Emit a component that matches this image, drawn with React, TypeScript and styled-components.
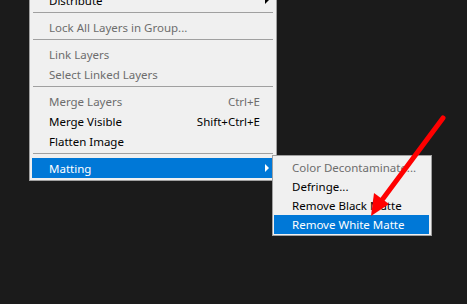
import * as React from 'react';
import styled, { createGlobalStyle } from 'styled-components';

interface Item {
  label?: string;
  shortcut?: string;
  disabled?: boolean;
  submenu?: boolean;
  active?: boolean;
  separator?: boolean;
}

const layerItems: Item[] = [
  { label: 'Distribute', submenu: true },
  { separator: true },
  { label: 'Lock All Layers in Group...', disabled: true },
  { separator: true },
  { label: 'Link Layers', disabled: true },
  { label: 'Select Linked Layers', disabled: true },
  { separator: true },
  { label: 'Merge Layers', shortcut: 'Ctrl+E', disabled: true },
  { label: 'Merge Visible', shortcut: 'Shift+Ctrl+E' },
  { label: 'Flatten Image' },
  { separator: true },
  { label: 'Matting', submenu: true, active: true },
];

const mattingItems: Item[] = [
  { label: 'Color Decontaminate...', disabled: true },
  { label: 'Defringe...' },
  { label: 'Remove Black Matte' },
  { label: 'Remove White Matte', active: true },
];

export default function App() {
  return (
    <>
      <GlobalStyle />
      <Stage>
        <LayerMenu>
          {layerItems.map((item, i) =>
            item.separator ? (
              <Separator key={i} />
            ) : (
              <Row key={i} $active={item.active} $disabled={item.disabled}>
                <Label>{item.label}</Label>
                {item.shortcut && <Shortcut>{item.shortcut}</Shortcut>}
                {item.submenu && <Caret $active={item.active} />}
                {item.active && (
                  <SubMenu>
                    {mattingItems.map(sub => (
                      <SubRow
                        key={sub.label}
                        $active={sub.active}
                        $disabled={sub.disabled}
                      >
                        {sub.label}
                      </SubRow>
                    ))}
                  </SubMenu>
                )}
              </Row>
            ),
          )}
        </LayerMenu>
        <Pointer width="467" height="304" viewBox="0 0 467 304">
          <line
            x1="443"
            y1="118"
            x2="382"
            y2="200"
            stroke="#f00"
            strokeWidth="5"
            strokeLinecap="round"
          />
          <polygon points="371,216 374,193 389,204" fill="#f00" />
        </Pointer>
      </Stage>
    </>
  );
}

const GlobalStyle = createGlobalStyle`
  html, body {
    margin: 0;
    background: #1b1b1b;
  }
  body {
    font-family: 'Noto Sans', 'Open Sans', sans-serif;
    font-size: 11.5px;
  }
`;

const Stage = styled.div`
  position: relative;
  width: 467px;
  height: 304px;
  overflow: hidden;
  background: #1b1b1b;
`;

const LayerMenu = styled.div`
  position: absolute;
  left: 29px;
  top: -13px;
  width: 242px;
  padding: 2px;
  background: #f0f0f0;
  border: 1px solid #a0a0a0;
  display: flex;
  flex-direction: column;
`;

const Separator = styled.div`
  height: 1px;
  margin: 2px 1px 4px;
  background: #a0a0a0;
`;

const Row = styled.div<{ $active?: boolean; $disabled?: boolean }>`
  position: relative;
  display: flex;
  align-items: center;
  height: 20px;
  padding: 0 14px 0 17px;
  background: ${p => (p.$active ? '#0078d7' : 'transparent')};
  color: ${p => (p.$active ? '#fff' : p.$disabled ? '#6d6d6d' : '#000')};
  white-space: nowrap;
`;

const Label = styled.span`
  flex: 1;
`;

const Shortcut = styled.span`
  text-align: right;
`;

const Caret = styled.span<{ $active?: boolean }>`
  position: absolute;
  right: 5px;
  top: 50%;
  margin-top: -4px;
  width: 0;
  height: 0;
  border-top: 4px solid transparent;
  border-bottom: 4px solid transparent;
  border-left: 4px solid ${p => (p.$active ? '#fff' : '#000')};
`;

const SubMenu = styled.div`
  position: absolute;
  left: 240px;
  top: -3px;
  width: 155px;
  padding: 2px 2px 1px 1px;
  background: #f0f0f0;
  border: 1px solid #a0a0a0;
  display: flex;
  flex-direction: column;
  z-index: 2;
`;

const SubRow = styled.div<{ $active?: boolean; $disabled?: boolean }>`
  height: 19px;
  line-height: 19px;
  padding-left: 18px;
  background: ${p => (p.$active ? '#0078d7' : 'transparent')};
  color: ${p => (p.$active ? '#fff' : p.$disabled ? '#6d6d6d' : '#000')};
  white-space: nowrap;
`;

const Pointer = styled.svg`
  position: absolute;
  left: 0;
  top: 0;
  pointer-events: none;
  z-index: 5;
`;
